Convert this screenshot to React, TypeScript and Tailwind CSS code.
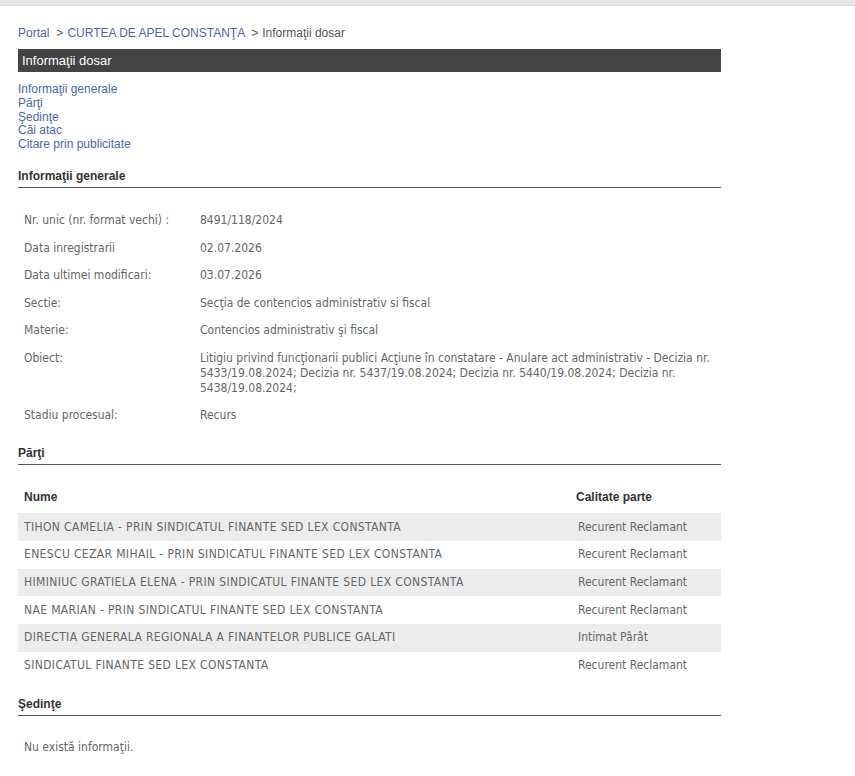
const arial = "font-['Liberation_Sans',Arial,sans-serif]";
const verdana = "font-['DejaVu_Sans_Condensed','DejaVu_Sans',Verdana,sans-serif]";

const NAV_LINKS = [
  "Informaţii generale",
  "Părţi",
  "Şedinţe",
  "Căi atac",
  "Citare prin publicitate",
];

const INFO_ROWS: Array<{ label: string; value: string[] }> = [
  { label: "Nr. unic (nr. format vechi) :", value: ["8491/118/2024"] },
  { label: "Data inregistrarii", value: ["02.07.2026"] },
  { label: "Data ultimei modificari:", value: ["03.07.2026"] },
  { label: "Sectie:", value: ["Secţia de contencios administrativ si fiscal"] },
  { label: "Materie:", value: ["Contencios administrativ şi fiscal"] },
  {
    label: "Obiect:",
    value: [
      "Litigiu privind funcţionarii publici Acţiune în constatare - Anulare act administrativ - Decizia nr.",
      "5433/19.08.2024; Decizia nr. 5437/19.08.2024; Decizia nr. 5440/19.08.2024; Decizia nr.",
      "5438/19.08.2024;",
    ],
  },
  { label: "Stadiu procesual:", value: ["Recurs"] },
];

const PARTI = [
  { nume: "TIHON CAMELIA - PRIN SINDICATUL FINANTE SED LEX CONSTANTA", calitate: "Recurent Reclamant" },
  { nume: "ENESCU CEZAR MIHAIL - PRIN SINDICATUL FINANTE SED LEX CONSTANTA", calitate: "Recurent Reclamant" },
  { nume: "HIMINIUC GRATIELA ELENA - PRIN SINDICATUL FINANTE SED LEX CONSTANTA", calitate: "Recurent Reclamant" },
  { nume: "NAE MARIAN - PRIN SINDICATUL FINANTE SED LEX CONSTANTA", calitate: "Recurent Reclamant" },
  { nume: "DIRECTIA GENERALA REGIONALA A FINANTELOR PUBLICE GALATI", calitate: "Intimat Pârât" },
  { nume: "SINDICATUL FINANTE SED LEX CONSTANTA", calitate: "Recurent Reclamant" },
];

function SectionTitle({ children }: { children: React.ReactNode }) {
  return (
    <div
      className={`${arial} text-[12px] leading-[14px] font-bold text-[#333] pb-[4px] border-b border-[#555]`}
    >
      {children}
    </div>
  );
}

export default function App() {
  return (
    <div className="min-h-[776px] bg-white">
      <div className="h-[6px] bg-[#e6e6e6] border-b border-[#dcdcdc]" />
      <div className="ml-[18px] w-[703px] pt-[20px] pb-[24px]">
        <div className={`${arial} text-[12px] leading-[14px] text-[#555] whitespace-nowrap`}>
          <span className="text-[#4a67a8]">Portal</span>
          <span className="ml-[7px] mr-[4px]">&gt;</span>
          <span className="text-[#4a67a8]">CURTEA DE APEL CONSTANŢA</span>
          <span className="ml-[6px] mr-[4px]">&gt;</span>
          <span>Informaţii dosar</span>
        </div>

        <div
          className={`${arial} mt-[9px] h-[23px] bg-[#444] pl-[4px] text-[13px] leading-[23px] text-white`}
        >
          Informaţii dosar
        </div>

        <div className={`${arial} mt-[11px] flex flex-col text-[12px] leading-[13.75px] text-[#4a67a8]`}>
          {NAV_LINKS.map((link) => (
            <span key={link}>{link}</span>
          ))}
        </div>

        <div className="mt-[17px]">
          <SectionTitle>Informaţii generale</SectionTitle>
        </div>

        <div className={`${verdana} mt-[19px] text-[12px] leading-[15px] text-[#666]`}>
          {INFO_ROWS.map((row) => (
            <div key={row.label} className="flex py-[6.25px]">
              <div className="w-[176px] shrink-0 pl-[6px] whitespace-nowrap">{row.label}</div>
              <div className="pl-[6px] flex flex-col">
                {row.value.map((line) => (
                  <span key={line} className="whitespace-nowrap">
                    {line}
                  </span>
                ))}
              </div>
            </div>
          ))}
        </div>

        <div className="mt-[17px]">
          <SectionTitle>Părţi</SectionTitle>
        </div>

        <div className="mt-[18px]">
          <div className={`${arial} flex pt-[7px] pb-[9px] text-[12px] leading-[14px] font-bold text-[#333]`}>
            <div className="w-[554px] pl-[6px]">Nume</div>
            <div className="pl-[4px]">Calitate parte</div>
          </div>
          <div className={`${verdana} text-[12px] leading-[15px] text-[#666]`}>
            {PARTI.map((p, i) => (
              <div
                key={p.nume}
                className={`flex py-[6.33px] ${i % 2 === 0 ? "bg-[#ececec]" : "bg-white"}`}
              >
                <div className="w-[554px] pl-[6px] whitespace-nowrap tracking-[0.36px]">{p.nume}</div>
                <div className="pl-[6px] whitespace-nowrap">{p.calitate}</div>
              </div>
            ))}
          </div>
        </div>

        <div className="mt-[18px]">
          <SectionTitle>Şedinţe</SectionTitle>
        </div>

        <div className={`${verdana} mt-[24px] pl-[6px] text-[12px] leading-[15px] text-[#666]`}>
          Nu există informaţii.
        </div>
      </div>
    </div>
  );
}
